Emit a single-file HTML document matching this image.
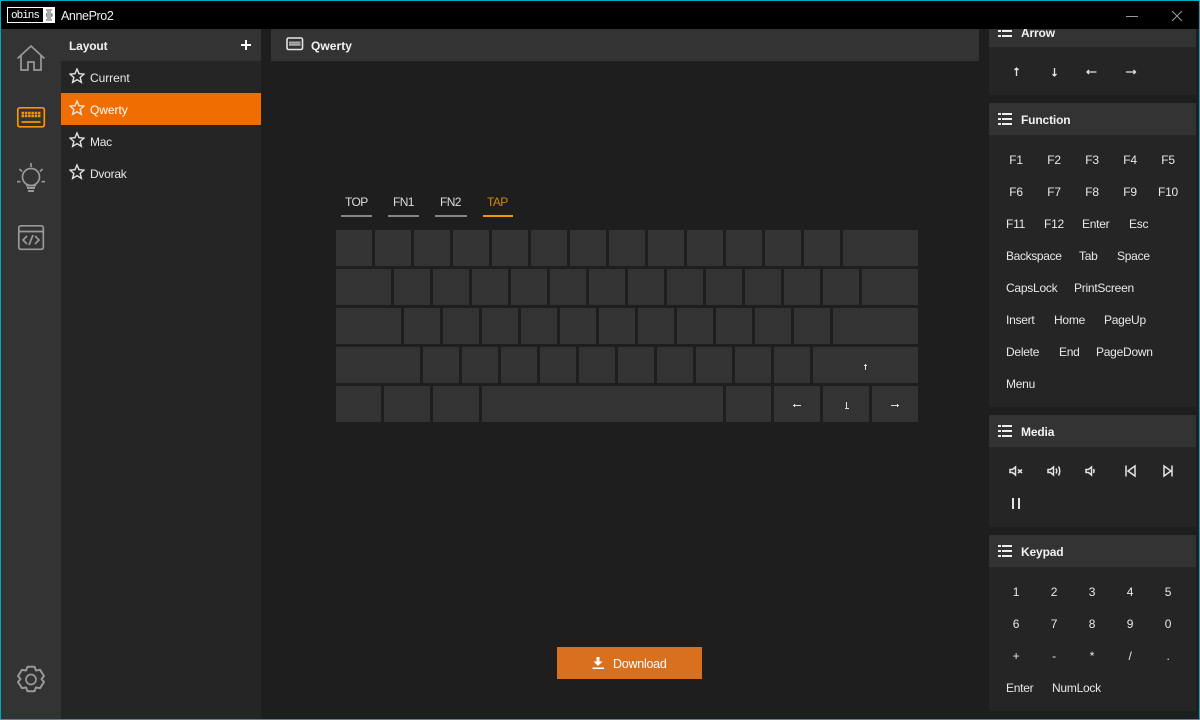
<!DOCTYPE html>
<html><head><meta charset="utf-8"><title>AnnePro2</title>
<style>
html,body{margin:0;padding:0;background:#1e1e1e}
#a{position:relative;width:1200px;height:720px;overflow:hidden;background:#1e1e1e;font-family:"Liberation Sans",sans-serif;font-size:12px;color:#e8e8e8}
#a div,#a svg{position:absolute}
.k{background:#333;top:0;height:36px}
.r{left:0;width:1200px;height:36px;top:0}
.t{white-space:nowrap;line-height:16px;height:16px;letter-spacing:-.25px}
.c{width:60px;text-align:center}
.b{font-weight:bold;color:#f2f2f2;letter-spacing:-.15px}
.h{left:989px;width:207px;height:32px;background:#333}
.p{left:989px;width:207px;background:#252525}
.u{top:215px;height:2px;background:#858585}
.g{letter-spacing:-.6px}
</style></head><body><div id="a">
<div style="left:0;top:29px;width:61px;height:691px;background:#333"></div>
<div style="left:61px;top:29px;width:200px;height:691px;background:#252525"></div>
<div style="left:61px;top:29px;width:200px;height:32px;background:#333"></div>
<div style="left:61px;top:93px;width:200px;height:32px;background:#f06e00"></div>
<div style="left:271px;top:29px;width:708px;height:32px;background:#333"></div>

<!-- right panels -->
<div class="p" style="top:47px;height:48px"></div>
<div class="h" style="top:15px"></div>
<div class="p" style="top:135px;height:272px"></div>
<div class="h" style="top:103px"></div>
<div class="p" style="top:447px;height:80px"></div>
<div class="h" style="top:415px"></div>
<div class="p" style="top:567px;height:144px"></div>
<div class="h" style="top:535px"></div>

<div class="t b" style="left:1021px;top:25px">Arrow</div>
<div class="t b" style="left:1021px;top:112px">Function</div>
<div class="t b" style="left:1021px;top:424px">Media</div>
<div class="t b" style="left:1021px;top:544px">Keypad</div>
<svg style="left:998px;top:0" width="15" height="560" fill="#eee"><path d="M0 25h3v2H0zM4 25h10v2H4zM0 30h3v2H0zM4 30h10v2H4zM0 35h3v2H0zM4 35h10v2H4zM0 113h3v2H0zM4 113h10v2H4zM0 118h3v2H0zM4 118h10v2H4zM0 123h3v2H0zM4 123h10v2H4zM0 425h3v2H0zM4 425h10v2H4zM0 430h3v2H0zM4 430h10v2H4zM0 435h3v2H0zM4 435h10v2H4zM0 545h3v2H0zM4 545h10v2H4zM0 550h3v2H0zM4 550h10v2H4zM0 555h3v2H0zM4 555h10v2H4z"/></svg>

<!-- title bar -->
<div style="left:0;top:0;width:1200px;height:29px;background:#000"></div>
<div style="left:7px;top:7px;width:48px;height:16px;background:#fff"></div>
<div style="left:8px;top:8px;width:35px;height:14px;background:#000"></div>
<div class="t" style="left:11px;top:8px;color:#fff;font-family:'Liberation Mono',monospace;font-size:11px;letter-spacing:-1px">obins</div>
<svg style="left:46px;top:9px" width="7" height="12"><path d="M0 1h6M1 3h4M0 5h6v2H0zM1 9h4M0 11h6" stroke="#555" fill="none"/></svg>
<div class="t" style="left:61px;top:8px;color:#f0f0f0;font-size:12.5px;letter-spacing:-.4px">AnnePro2</div>
<svg style="left:1120px;top:8px" width="70" height="16" fill="none" stroke="#9a9a9a"><path d="M6 8.500h12"/><path d="M52 3l10 10M62 3L52 13"/></svg>
<div style="left:0;top:0;width:1200px;height:1px;background:#00acba"></div>
<div style="left:0;top:0;width:1px;height:720px;background:#00acba"></div>
<div style="left:1199px;top:0;width:1px;height:720px;background:#00acba"></div>
<div style="left:0;top:719px;width:1200px;height:1px;background:#00acba"></div>

<!-- rail icons -->
<svg style="left:0;top:29px" width="61" height="691" fill="none" stroke="#999" stroke-width="1.700">
<path d="M17.500 29.500L31 17l13.500 12.500M21 26.500v14.500h7v-8h6v8h7V26.500"/>
<g stroke="#f39800"><rect x="17.800" y="78.800" width="26.500" height="19" rx="2"/><path d="M21.500 84h19M21.500 87h19" stroke-width="2.500" stroke-dasharray="2.500 .8"/><path d="M21.500 93h19"/></g>
<circle cx="31" cy="148" r="8.500"/><path d="M26 156.500h10M27 159h8M28 162h6" stroke-width="2"/>
<path d="M31 134v4M19.500 140l2.500 2.500M42.500 140l-2.500 2.500M17 152.700h3.500M41.500 152.700h3.500"/>
<rect x="18.800" y="196.800" width="24.500" height="23.500" rx="2"/><path d="M18.800 202.500h24.500M27 207l-4 4 4 4M35 207l4 4-4 4M33 206l-4 10"/>
<path stroke-linejoin="round" stroke-width="2" d="M27.500 637.800h7l1.500 3.700 4-.7 4 6.200-2.500 3 2.500 3-4 6.200-4-.7-1.500 3.700h-7l-1.500-3.700-4 .7-4-6.200 2.500-3-2.500-3 4-6.200 4 .7z"/><circle cx="31" cy="650.500" r="5"/>
</svg>

<!-- sidebar -->
<div class="t b" style="left:69px;top:38px">Layout</div>
<svg style="left:241px;top:40px" width="10" height="10"><path d="M0 4h10v2H0zM4 0h2v10H4z" fill="#fff"/></svg>
<div class="t" style="left:90px;top:70px;letter-spacing:-.05px">Current</div>
<div class="t" style="left:90px;top:102px;color:#fff;letter-spacing:-.05px">Qwerty</div>
<div class="t" style="left:90px;top:134px">Mac</div>
<div class="t" style="left:90px;top:166px">Dvorak</div>
<svg style="left:69px;top:68px" width="16" height="115" fill="none" stroke="#e4e4e4" stroke-width="1.400"><path d="M8 1l2 4.700 5 .4-3.800 3.300 1.200 5L8 11.700 3.600 14.400l1.200-5L1 6.100l5-.4z"/><path d="M8 33l2 4.700 5 .4-3.800 3.300 1.200 5L8 43.700 3.600 46.400l1.200-5L1 38.100l5-.4z"/><path d="M8 65l2 4.700 5 .4-3.800 3.300 1.200 5L8 75.700 3.600 78.400l1.200-5L1 70.100l5-.4z"/><path d="M8 97l2 4.700 5 .4-3.800 3.300 1.200 5L8 107.700 3.600 110.400l1.200-5L1 102.100l5-.4z"/></svg>

<!-- header -->
<svg style="left:286px;top:36px" width="18" height="15" fill="none"><rect x="1" y="2" width="15.500" height="11.500" rx="1.500" stroke="#e4e4e4" stroke-width="1.600"/><path d="M3 6.500h11.500M3 8.800h11.500" stroke="#aaa" stroke-width="2"/></svg>
<div class="t b" style="left:311px;top:38px;letter-spacing:.05px">Qwerty</div>

<!-- tabs -->
<div class="t g" style="left:345px;top:194px;color:#ddd">TOP</div>
<div class="t g" style="left:393px;top:194px;color:#ddd">FN1</div>
<div class="t g" style="left:440px;top:194px;color:#ddd">FN2</div>
<div class="t g" style="left:487px;top:194px;color:#d98500">TAP</div>
<div class="u" style="left:341px;width:31px"></div>
<div class="u" style="left:388px;width:31px"></div>
<div class="u" style="left:435px;width:32px"></div>
<div class="u" style="left:483px;width:30px;background:#f39800"></div>

<!-- keyboard -->
<div class="r" style="top:230px">
<div class="k" style="left:336px;width:36px"></div><div class="k" style="left:375px;width:36px"></div><div class="k" style="left:414px;width:36px"></div><div class="k" style="left:453px;width:36px"></div><div class="k" style="left:492px;width:36px"></div><div class="k" style="left:531px;width:36px"></div><div class="k" style="left:570px;width:36px"></div><div class="k" style="left:609px;width:36px"></div><div class="k" style="left:648px;width:36px"></div><div class="k" style="left:687px;width:36px"></div><div class="k" style="left:726px;width:36px"></div><div class="k" style="left:765px;width:36px"></div><div class="k" style="left:804px;width:36px"></div><div class="k" style="left:843px;width:75px"></div>
</div>
<div class="r" style="top:269px">
<div class="k" style="left:336px;width:55px"></div><div class="k" style="left:394px;width:36px"></div><div class="k" style="left:433px;width:36px"></div><div class="k" style="left:472px;width:36px"></div><div class="k" style="left:511px;width:36px"></div><div class="k" style="left:550px;width:36px"></div><div class="k" style="left:589px;width:36px"></div><div class="k" style="left:628px;width:36px"></div><div class="k" style="left:667px;width:36px"></div><div class="k" style="left:706px;width:36px"></div><div class="k" style="left:745px;width:36px"></div><div class="k" style="left:784px;width:36px"></div><div class="k" style="left:823px;width:36px"></div><div class="k" style="left:862px;width:56px"></div>
</div>
<div class="r" style="top:308px">
<div class="k" style="left:336px;width:65px"></div><div class="k" style="left:404px;width:36px"></div><div class="k" style="left:443px;width:36px"></div><div class="k" style="left:482px;width:36px"></div><div class="k" style="left:521px;width:36px"></div><div class="k" style="left:560px;width:36px"></div><div class="k" style="left:599px;width:36px"></div><div class="k" style="left:638px;width:36px"></div><div class="k" style="left:677px;width:36px"></div><div class="k" style="left:716px;width:36px"></div><div class="k" style="left:755px;width:36px"></div><div class="k" style="left:794px;width:36px"></div><div class="k" style="left:833px;width:85px"></div>
</div>
<div class="r" style="top:347px">
<div class="k" style="left:336px;width:84px"></div><div class="k" style="left:423px;width:36px"></div><div class="k" style="left:462px;width:36px"></div><div class="k" style="left:501px;width:36px"></div><div class="k" style="left:540px;width:36px"></div><div class="k" style="left:579px;width:36px"></div><div class="k" style="left:618px;width:36px"></div><div class="k" style="left:657px;width:36px"></div><div class="k" style="left:696px;width:36px"></div><div class="k" style="left:735px;width:36px"></div><div class="k" style="left:774px;width:36px"></div><div class="k" style="left:813px;width:105px"></div>
</div>
<div class="r" style="top:386px">
<div class="k" style="left:336px;width:45px"></div><div class="k" style="left:384px;width:46px"></div><div class="k" style="left:433px;width:46px"></div><div class="k" style="left:482px;width:241px"></div><div class="k" style="left:726px;width:45px"></div><div class="k" style="left:774px;width:46px"></div><div class="k" style="left:823px;width:46px"></div><div class="k" style="left:872px;width:46px"></div>
</div>
<svg style="left:790px;top:355px" width="112" height="60" fill="none" stroke="#ddd"><path d="M75.500 9v6M74 10.500h3"/><path d="M3 50.500h8M4.500 49v3"/><path d="M56.500 47v6M55 53.500h4"/><path d="M101 50.500h8M107.500 49v3"/></svg>

<!-- arrow -->
<svg style="left:1010px;top:65px" width="130" height="14" fill="none" stroke="#e4e4e4" stroke-width="1.300"><path d="M6.500 3v8M4.500 5l2-2 2 2"/><path d="M44.500 3v8M42.500 9l2 2 2-2"/><path d="M77 7h9.500M79 5l-2 2 2 2"/><path d="M116 7h9.500M123.500 5l2 2-2 2"/></svg>

<!-- function -->
<div class="t c" style="left:986px;top:152px">F1</div><div class="t c" style="left:1024px;top:152px">F2</div><div class="t c" style="left:1062px;top:152px">F3</div><div class="t c" style="left:1100px;top:152px">F4</div><div class="t c" style="left:1138px;top:152px">F5</div>
<div class="t c" style="left:986px;top:184px">F6</div><div class="t c" style="left:1024px;top:184px">F7</div><div class="t c" style="left:1062px;top:184px">F8</div><div class="t c" style="left:1100px;top:184px">F9</div><div class="t c" style="left:1138px;top:184px">F10</div>
<div class="t" style="left:1006px;top:216px">F11</div><div class="t" style="left:1044px;top:216px">F12</div><div class="t" style="left:1082px;top:216px">Enter</div><div class="t" style="left:1129px;top:216px">Esc</div>
<div class="t" style="left:1006px;top:248px;letter-spacing:-.35px">Backspace</div><div class="t" style="left:1079px;top:248px">Tab</div><div class="t" style="left:1117px;top:248px">Space</div>
<div class="t" style="left:1006px;top:280px">CapsLock</div><div class="t" style="left:1074px;top:280px">PrintScreen</div>
<div class="t" style="left:1006px;top:312px">Insert</div><div class="t" style="left:1054px;top:312px">Home</div><div class="t" style="left:1104px;top:312px">PageUp</div>
<div class="t" style="left:1006px;top:344px">Delete</div><div class="t" style="left:1059px;top:344px">End</div><div class="t" style="left:1096px;top:344px">PageDown</div>
<div class="t" style="left:1006px;top:376px">Menu</div>

<!-- media -->
<svg style="left:1005px;top:460px" width="175" height="52" fill="none" stroke="#e4e4e4" stroke-width="1.500">
<path d="M5 9.500h2.500l3-2.500v8l-3-2.500H5zM13 9.500l4 3.500M17 9.500l-4 3.500"/>
<path d="M43 9.500h2.500l3-2.500v8l-3-2.500H43zM51 8.500q1.500 2.500 0 5M53.500 6.500q2.500 4.500 0 9"/>
<path d="M81 9.500h2.500l3-2.500v8l-3-2.500H81zM88.500 9q1 2 0 4"/>
<path d="M121 5.500v11M130 6l-7 5 7 5z"/>
<path d="M167 5.500v11M159 6l7 5-7 5z"/>
<path d="M8 38v11M14 38v11" stroke-width="2"/>
</svg>

<!-- keypad -->
<div class="t c" style="left:986px;top:584px">1</div><div class="t c" style="left:1024px;top:584px">2</div><div class="t c" style="left:1062px;top:584px">3</div><div class="t c" style="left:1100px;top:584px">4</div><div class="t c" style="left:1138px;top:584px">5</div>
<div class="t c" style="left:986px;top:616px">6</div><div class="t c" style="left:1024px;top:616px">7</div><div class="t c" style="left:1062px;top:616px">8</div><div class="t c" style="left:1100px;top:616px">9</div><div class="t c" style="left:1138px;top:616px">0</div>
<div class="t c" style="left:986px;top:648px">+</div><div class="t c" style="left:1024px;top:648px">-</div><div class="t c" style="left:1062px;top:648px">*</div><div class="t c" style="left:1100px;top:648px">/</div><div class="t c" style="left:1138px;top:648px">.</div>
<div class="t" style="left:1006px;top:680px">Enter</div><div class="t" style="left:1052px;top:680px">NumLock</div>

<!-- download -->
<div style="left:557px;top:647px;width:145px;height:32px;background:#d9701e"></div>
<svg style="left:592px;top:657px" width="13" height="13" fill="#fff"><path d="M4.500 0h3v4.500H10.500L6 9 1.500 4.500h3zM.5 10.500h11.500V12H.5z"/></svg>
<div class="t" style="left:613px;top:656px;color:#fff;font-size:12.500px">Download</div>
</div></body></html>
